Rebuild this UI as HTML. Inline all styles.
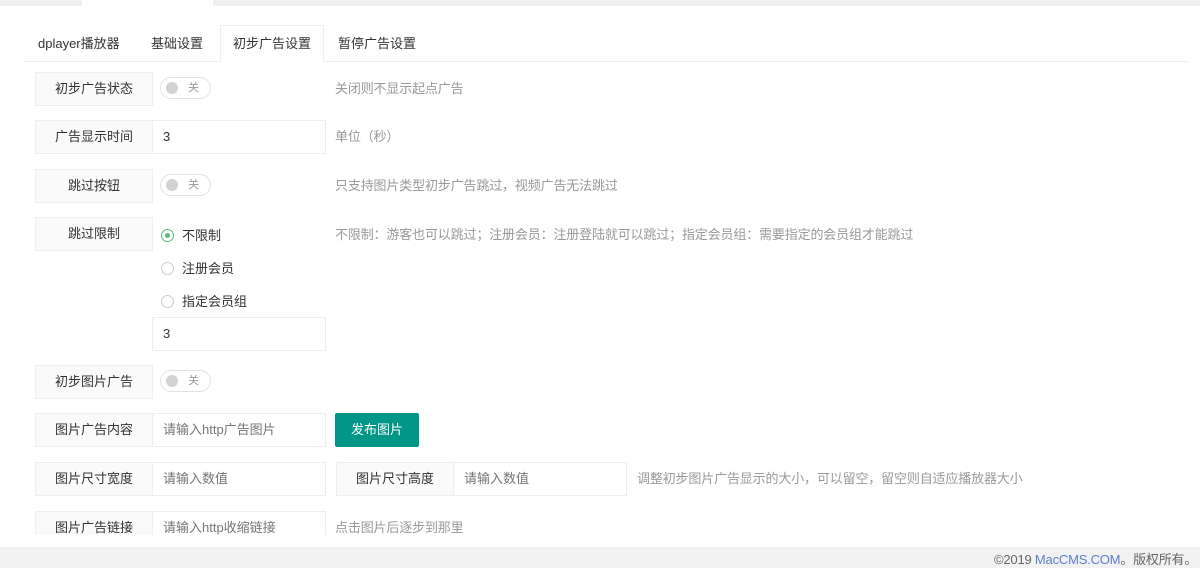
<!DOCTYPE html>
<html><head><meta charset="utf-8"><style>
*{box-sizing:border-box;margin:0;padding:0}
body{width:1200px;height:568px;overflow:hidden;background:#fff;font-family:"Liberation Sans","Noto Sans CJK SC",sans-serif;font-size:13px;color:#333;position:relative}
.a{position:absolute}
.lab{position:absolute;left:35px;width:118px;height:34px;border:1px solid #eee;background:#fafafa;text-align:center;line-height:32px;font-size:13px;color:#333}
.inp{position:absolute;width:174px;height:34px;border:1px solid #eee;background:#fff;line-height:32px;padding-left:10px;font-size:13px;color:#333}
.ph{color:#757575}
.tip{position:absolute;color:#999;font-size:13px;line-height:34px;letter-spacing:-0.15px;white-space:nowrap}
.sw{position:absolute;left:160px;width:51px;height:22px;border:1px solid #e2e2e2;border-radius:11px;background:#fff}
.sw:before{content:"";position:absolute;left:5px;top:4px;width:12px;height:12px;border-radius:50%;background:#d2d2d2}
.sw span{position:absolute;left:27px;top:0;line-height:20px;font-size:11px;color:#999}
.rad{position:absolute;left:161px;width:13px;height:13px;border:1px solid #ccc;border-radius:50%}
.rt{position:absolute;left:182px;font-size:13px;line-height:16px}
.tab{position:absolute;top:26px;height:36px;line-height:36px;font-size:13px;color:#333}
</style></head><body>
<div class="a" style="left:0;top:0;width:1200px;height:6px;background:#efefef"></div>
<div class="a" style="left:82px;top:0;width:131px;height:6px;background:#fff"></div>
<div class="a" style="left:24px;top:61px;width:1164px;height:1px;background:#eee"></div>
<div class="tab" style="left:38px">dplayer播放器</div>
<div class="tab" style="left:151px">基础设置</div>
<div class="a" style="left:220px;top:25px;width:104px;height:37px;border:1px solid #eee;border-bottom:1px solid #fff;background:#fff"></div>
<div class="tab" style="left:233px">初步广告设置</div>
<div class="tab" style="left:338px">暂停广告设置</div>

<div class="lab" style="top:72px">初步广告状态</div>
<div class="sw" style="top:77px"><span>关</span></div>
<div class="tip" style="left:335px;top:72px">关闭则不显示起点广告</div>

<div class="lab" style="top:120px">广告显示时间</div>
<div class="inp" style="left:152px;top:120px">3</div>
<div class="tip" style="left:335px;top:120px">单位（秒）</div>

<div class="lab" style="top:169px">跳过按钮</div>
<div class="sw" style="top:174px"><span>关</span></div>
<div class="tip" style="left:335px;top:169px">只支持图片类型初步广告跳过，视频广告无法跳过</div>

<div class="lab" style="top:217px">跳过限制</div>
<div class="rad" style="top:229px;border-color:#5fb878"><div class="a" style="left:3px;top:3px;width:5px;height:5px;border-radius:50%;background:#5fb878"></div></div>
<div class="rt" style="top:228px">不限制</div>
<div class="rad" style="top:262px"></div>
<div class="rt" style="top:261px">注册会员</div>
<div class="rad" style="top:295px"></div>
<div class="rt" style="top:294px">指定会员组</div>
<div class="inp" style="left:152px;top:317px">3</div>
<div class="tip" style="left:335px;top:218px">不限制：游客也可以跳过；注册会员：注册登陆就可以跳过；指定会员组：需要指定的会员组才能跳过</div>

<div class="lab" style="top:365px">初步图片广告</div>
<div class="sw" style="top:370px"><span>关</span></div>

<div class="lab" style="top:413px">图片广告内容</div>
<div class="inp ph" style="left:152px;top:413px">请输入http广告图片</div>
<div class="a" style="left:335px;top:413px;width:84px;height:34px;background:#009688;color:#fff;text-align:center;line-height:34px;border-radius:2px;font-size:13px">发布图片</div>

<div class="lab" style="top:462px">图片尺寸宽度</div>
<div class="inp ph" style="left:152px;top:462px">请输入数值</div>
<div class="lab" style="left:336px;top:462px">图片尺寸高度</div>
<div class="inp ph" style="left:453px;top:462px">请输入数值</div>
<div class="tip" style="left:637px;top:462px">调整初步图片广告显示的大小，可以留空，留空则自适应播放器大小</div>

<div class="a" style="left:0;top:510px;width:1200px;height:25px;overflow:hidden">
<div class="lab" style="top:1px">图片广告链接</div>
<div class="inp ph" style="left:152px;top:1px">请输入http收缩链接</div>
<div class="tip" style="left:335px;top:1px">点击图片后逐步到那里</div>
</div>

<div class="a" style="left:0;top:547px;width:1200px;height:21px;background:#f2f2f2"></div>
<div class="a" style="left:994px;top:552px;font-size:13px;color:#666;line-height:16px;white-space:nowrap;letter-spacing:-0.2px">©2019 <span style="color:#5c7fc9">MacCMS.COM</span>。版权所有。</div>
</body></html>
